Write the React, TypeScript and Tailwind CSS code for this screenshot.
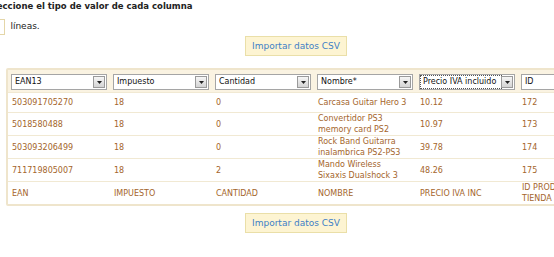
const columns = ['EAN13', 'Impuesto', 'Cantidad', 'Nombre*', 'Precio IVA incluido', 'ID'];

const rows = [
  ['503091705270', '18', '0', 'Carcasa Guitar Hero 3', '10.12', '172'],
  ['5018580488', '18', '0', 'Convertidor PS3 memory card PS2', '10.97', '173'],
  ['503093206499', '18', '0', 'Rock Band Guitarra inalambrica PS2-PS3', '39.78', '174'],
  ['711719805007', '18', '2', 'Mando Wireless Sixaxis Dualshock 3', '48.26', '175'],
];

const footer = ['EAN', 'IMPUESTO', 'CANTIDAD', 'NOMBRE', 'PRECIO IVA INC', 'ID PRODUCTO TIENDA'];

function FakeSelect({ label, focused }: { label: string; focused?: boolean }) {
  return (
    <div className="flex items-center h-[16px] w-[96px] bg-white border border-[#a5a5a5] px-[1px]">
      <span
        className={`flex-1 whitespace-nowrap overflow-hidden leading-[12px] px-[2px] ${
          focused ? 'outline outline-1 outline-dotted outline-[#555]' : ''
        }`}
      >
        {label}
      </span>
      <span className="w-[12px] h-[12px] shrink-0 flex items-center justify-center bg-gradient-to-b from-[#f6f6f6] to-[#d4d4d4] border border-[#9a9a9a]">
        <svg width="5" height="3" viewBox="0 0 5 3">
          <path d="M0 0h5L2.5 3z" fill="#222" />
        </svg>
      </span>
    </div>
  );
}

function ImportButton() {
  return (
    <div className="flex justify-center">
      <button className="bg-[#fdf4d2] border border-[#eadfa8] text-[#3d7fc6] text-[9px] px-[6px] h-[20px] leading-[18px]">
        Importar datos CSV
      </button>
    </div>
  );
}

export default function App() {
  return (
    <div className="w-[554px] h-[257px] overflow-hidden bg-white text-[#222] font-['DejaVu_Sans',Verdana,sans-serif] text-[8px]">
      <div className="-ml-[18px] w-[628px]">
        <h2 className="font-bold text-[8.5px] leading-[11px] pt-[1px]">Seleccione el tipo de valor de cada columna</h2>

        <div className="flex items-center mt-[7px] -ml-[37px] text-[9px]">
          <span className="mr-[4px]">Mostrar</span>
          <span className="w-[22px] h-[16px] border border-[#e4d6a8] bg-white" />
          <span className="ml-[5px]">líneas.</span>
        </div>

        <div className="mt-[1px]">
          <ImportButton />
        </div>

        <div className="ml-[24px] mt-[12px] w-[620px] border-2 border-[#efe5cc] rounded-[2px]">
          <table className="border-collapse text-[#a4652b] text-[8px] leading-[11px]">
            <thead>
              <tr className="bg-[#faf3e2]">
                {columns.map((c, i) => (
                  <th key={c} className="w-[102px] px-[3px] pt-[4px] pb-[2px] font-normal text-left text-[#111]">
                    <FakeSelect label={c} focused={i === 4} />
                  </th>
                ))}
              </tr>
            </thead>
            <tbody>
              {rows.map((r) => (
                <tr key={r[0]} className="border-t border-[#f1e9d3]">
                  {r.map((v, i) => (
                    <td key={i} className={`pl-[4px] h-[20px] align-middle ${i === 3 ? 'pr-[7px]' : 'pr-[4px]'}`}>
                      {v}
                    </td>
                  ))}
                </tr>
              ))}
              <tr className="border-t border-[#f1e9d3]">
                {footer.map((v, i) => (
                  <td key={v} className="px-[4px] h-[20px] align-middle">
                    {i === 5 ? <div className="w-[60px]">{v}</div> : v}
                  </td>
                ))}
              </tr>
            </tbody>
          </table>
        </div>

        <div className="mt-[7px]">
          <ImportButton />
        </div>
      </div>
    </div>
  );
}
